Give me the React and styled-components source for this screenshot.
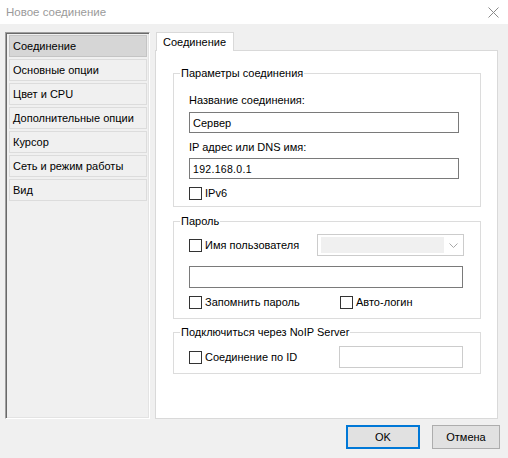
import React from "react";
import styled, { createGlobalStyle } from "styled-components";

const GlobalStyle = createGlobalStyle`
  html, body {
    margin: 0;
    padding: 0;
    background: #f0f0f0;
  }
  body {
    font-family: "Liberation Sans", Arial, sans-serif;
    font-size: 11px;
    color: #000;
  }
  * {
    box-sizing: border-box;
  }
`;

const Window = styled.div`
  width: 508px;
  height: 458px;
  background: #f0f0f0;
  display: flex;
  flex-direction: column;
  overflow: hidden;
`;

const TitleBar = styled.div`
  height: 24px;
  flex: none;
  background: #fff;
  display: flex;
  align-items: center;
  justify-content: space-between;
  padding: 0 9px 0 6px;
`;

const Title = styled.span`
  color: #9a9a9a;
  font-size: 11.5px;
`;

const Body = styled.div`
  display: flex;
  gap: 5px;
  padding: 8px 10px 0 5px;
`;

const Sidebar = styled.ul`
  width: 145px;
  height: 387px;
  margin: 0;
  padding: 2px 2px 2px 3px;
  list-style: none;
  border: 1px solid;
  border-color: #a0a0a0 #fff #fff #a0a0a0;
  box-shadow: inset 1px 1px 0 #696969, inset -1px -1px 0 #e3e3e3;
  display: flex;
  flex-direction: column;
  gap: 2px;
`;

const SideItem = styled.li`
  height: 22px;
  display: flex;
  align-items: center;
  padding-left: 3px;
  border: 1px solid ${(p) => (p.$active ? "#c4c4c4" : "#dcdcdc")};
  background: ${(p) => (p.$active ? "#d6d6d6" : "#f0f0f0")};
  white-space: nowrap;
`;

const PanelColumn = styled.div`
  width: 343px;
  height: 387px;
  display: flex;
  flex-direction: column;
`;

const Tab = styled.div`
  position: relative;
  z-index: 1;
  width: 78px;
  height: 19px;
  margin-left: 1px;
  margin-bottom: -1px;
  padding-left: 6px;
  display: flex;
  align-items: center;
  background: #fff;
  border: 1px solid #d9d9d9;
  border-bottom: none;
`;

const TabPage = styled.div`
  flex: 1;
  background: #fff;
  border: 1px solid #d9d9d9;
  padding: 15px 16px 0 17px;
  display: flex;
  flex-direction: column;
`;

const Group = styled.fieldset`
  margin: ${(p) => p.$gap || 0}px 0 0;
  padding: 0;
  min-width: 0;
  border: 1px solid #dcdcdc;
`;

const GroupTitle = styled.legend`
  margin-left: 6px;
  padding: 0 1px;
  line-height: 14px;
`;

const GroupBody = styled.div`
  padding: ${(p) => p.$pad};
  display: flex;
  flex-direction: column;
`;

const FieldLabel = styled.div`
  line-height: 14px;
  margin-top: ${(p) => p.$top || 0}px;
`;

const TextBox = styled.div`
  width: ${(p) => p.$w}px;
  height: ${(p) => p.$h || 21}px;
  margin-top: ${(p) => p.$top || 0}px;
  border: 1px solid ${(p) => (p.$disabled ? "#cccccc" : "#7a7a7a")};
  background: #fff;
  display: flex;
  align-items: center;
  padding-left: 3px;
  font-size: ${(p) => p.$size || 11}px;
  letter-spacing: ${(p) => p.$spacing || 0}px;
  flex: none;
`;

const Row = styled.div`
  display: flex;
  align-items: center;
  height: ${(p) => p.$h || 13}px;
  margin-top: ${(p) => p.$top || 0}px;
`;

const CheckLabel = styled.label`
  display: flex;
  align-items: center;
  gap: 3px;
  width: ${(p) => (p.$w ? `${p.$w}px` : "auto")};
  flex: none;
  line-height: 13px;
`;

const Box = styled.span`
  width: 13px;
  height: 13px;
  border: 1px solid #333;
  background: #fff;
  flex: none;
`;

const Combo = styled.div`
  width: 147px;
  height: 22px;
  border: 1px solid #cccccc;
  background: #fff;
  padding: 2px 0 2px 3px;
  display: flex;
  align-items: stretch;
`;

const ComboFill = styled.div`
  flex: 1;
  background: #f0f0f0;
`;

const ComboArrow = styled.div`
  width: 19px;
  display: flex;
  align-items: center;
  justify-content: center;
`;

const Footer = styled.div`
  display: flex;
  justify-content: flex-end;
  gap: 12px;
  padding: 6px 8px 0 0;
`;

const Button = styled.button`
  width: ${(p) => p.$w}px;
  height: 24px;
  padding: 0;
  font-family: inherit;
  font-size: 11px;
  color: #000;
  background: #e1e1e1;
  border: ${(p) => (p.$default ? "2px solid #0078d7" : "1px solid #adadad")};
`;

function Check({ children, w }) {
  return (
    <CheckLabel $w={w}>
      <Box />
      <span>{children}</span>
    </CheckLabel>
  );
}

const sections = [
  "Соединение",
  "Основные опции",
  "Цвет и CPU",
  "Дополнительные опции",
  "Курсор",
  "Сеть и режим работы",
  "Вид",
];

export default function App() {
  return (
    <Window>
      <GlobalStyle />
      <TitleBar>
        <Title>Новое соединение</Title>
        <svg width="11" height="11" viewBox="0 0 11 11">
          <path d="M0.5 0.5 L10.5 10.5 M10.5 0.5 L0.5 10.5" stroke="#8a8a8a" strokeWidth="1" fill="none" />
        </svg>
      </TitleBar>
      <Body>
        <Sidebar>
          {sections.map((s, i) => (
            <SideItem key={s} $active={i === 0}>
              {s}
            </SideItem>
          ))}
        </Sidebar>
        <PanelColumn>
          <Tab>Соединение</Tab>
          <TabPage>
            <Group>
              <GroupTitle>Параметры соединения</GroupTitle>
              <GroupBody $pad="13px 0 6px 15px">
                <FieldLabel>Название соединения:</FieldLabel>
                <TextBox $w={270} $top={5}>Сервер</TextBox>
                <FieldLabel $top={7}>IP адрес или DNS имя:</FieldLabel>
                <TextBox $w={270} $top={4} $size={10.5} $spacing={0.3}>
                  192.168.0.1
                </TextBox>
                <Row $top={8}>
                  <Check>IPv6</Check>
                </Row>
              </GroupBody>
            </Group>

            <Group $gap={7}>
              <GroupTitle>Пароль</GroupTitle>
              <GroupBody $pad="6px 0 9px 15px">
                <Row $h={22}>
                  <Check w={128}>Имя пользователя</Check>
                  <Combo>
                    <ComboFill />
                    <ComboArrow>
                      <svg width="9" height="5" viewBox="0 0 9 5">
                        <path d="M0.5 0.5 L4.5 4.5 L8.5 0.5" stroke="#a8a8a8" strokeWidth="1" fill="none" />
                      </svg>
                    </ComboArrow>
                  </Combo>
                </Row>
                <TextBox $w={274} $h={22} $top={10} />
                <Row $top={8}>
                  <Check w={151}>Запомнить пароль</Check>
                  <Check>Авто-логин</Check>
                </Row>
              </GroupBody>
            </Group>

            <Group $gap={6}>
              <GroupTitle>Подключиться через NoIP Server</GroupTitle>
              <GroupBody $pad="7px 0 5px 15px">
                <Row $h={22}>
                  <Check w={150}>Соединение по ID</Check>
                  <TextBox $w={124} $h={22} $disabled />
                </Row>
              </GroupBody>
            </Group>
          </TabPage>
        </PanelColumn>
      </Body>
      <Footer>
        <Button $w={74} $default>
          OK
        </Button>
        <Button $w={68}>Отмена</Button>
      </Footer>
    </Window>
  );
}
